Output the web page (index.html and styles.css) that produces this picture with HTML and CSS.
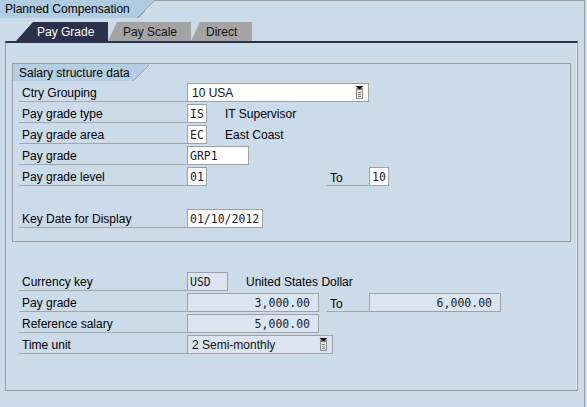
FILE: index.html
```html
<!DOCTYPE html>
<html lang="en">
<head>
    <meta charset="UTF-8">
    <title>Planned Compensation</title>
    <link rel="stylesheet" href="styles.css">
</head>
<body>
    <div class="screen">
        <div class="title-bar">
            <div class="title-tab">Planned Compensation</div>
            <div class="title-corner"></div>
            <div class="title-rule"></div>
        </div>

        <div class="tabstrip">
            <div class="tabs">
                <div class="tab tab-active">Pay Grade</div>
                <div class="tab tab-scale">Pay Scale</div>
                <div class="tab tab-direct">Direct</div>
            </div>

            <div class="tab-body">
                <!-- Salary structure data -->
                <div class="group">
                    <div class="group-head">
                        <div class="group-title">Salary structure data</div>
                        <div class="group-corner"></div>
                        <div class="group-rule"></div>
                    </div>
                    <div class="rows rows-group">
                        <div class="row">
                            <div class="lbl">Ctry Grouping</div>
                            <div class="fld w-ctry">
                                <span class="val">10 USA</span>
                                <svg class="f4" width="9" height="13" viewBox="0 0 9 13">
                                    <rect x="1" y="2" width="7" height="11" fill="#8c8c8c"/>
                                    <rect x="2" y="4" width="5" height="8" fill="#ececec"/>
                                    <path d="M3 6.5h3M3 8.5h3M3 10.5h3" stroke="#808080" stroke-width="1"/>
                                    <path d="M0.5 0H8.5L4.5 3.5Z" fill="#000"/>
                                </svg>
                            </div>
                        </div>
                        <div class="row">
                            <div class="lbl">Pay grade type</div>
                            <div class="fld mono w-2">IS</div>
                            <div class="desc">IT Supervisor</div>
                        </div>
                        <div class="row">
                            <div class="lbl">Pay grade area</div>
                            <div class="fld mono w-2">EC</div>
                            <div class="desc">East Coast</div>
                        </div>
                        <div class="row">
                            <div class="lbl">Pay grade</div>
                            <div class="fld mono w-grp">GRP1</div>
                        </div>
                        <div class="row">
                            <div class="lbl">Pay grade level</div>
                            <div class="fld mono w-2">01</div>
                            <div class="to to-far">To</div>
                            <div class="fld mono w-2">10</div>
                        </div>
                        <div class="row"></div>
                        <div class="row">
                            <div class="lbl">Key Date for Display</div>
                            <div class="fld mono w-date">01/10/2012</div>
                        </div>
                    </div>
                </div>

                <!-- Currency and amounts -->
                <div class="rows rows-lower">
                    <div class="row">
                        <div class="lbl">Currency key</div>
                        <div class="fld mono ro w-cur">USD</div>
                        <div class="desc">United States Dollar</div>
                    </div>
                    <div class="row">
                        <div class="lbl">Pay grade</div>
                        <div class="fld mono ro num w-amt">3,000.00</div>
                        <div class="to">To</div>
                        <div class="fld mono ro num w-amt">6,000.00</div>
                    </div>
                    <div class="row">
                        <div class="lbl">Reference salary</div>
                        <div class="fld mono ro num w-amt">5,000.00</div>
                    </div>
                    <div class="row">
                        <div class="lbl">Time unit</div>
                        <div class="fld ro w-unit">
                            <span class="val">2 Semi-monthly</span>
                            <svg class="f4" width="9" height="13" viewBox="0 0 9 13">
                                <rect x="1" y="2" width="7" height="11" fill="#8c8c8c"/>
                                <rect x="2" y="4" width="5" height="8" fill="#ececec"/>
                                <path d="M3 6.5h3M3 8.5h3M3 10.5h3" stroke="#808080" stroke-width="1"/>
                                <path d="M0.5 0H8.5L4.5 3.5Z" fill="#000"/>
                            </svg>
                        </div>
                    </div>
                </div>
            </div>
        </div>
    </div>
</body>
</html>
```

FILE: styles.css
```css
body {
    margin: 0;
    background: #cbdbea;
    font-family: 'Liberation Sans', Arial, sans-serif;
    font-size: 12px;
    color: #000;
}

.screen {
    width: 585px;
    height: 407px;
    box-sizing: border-box;
    border-right: 1px solid #9c9c9c;
}

/* screen title with slanted corner */
.title-bar {
    display: flex;
    height: 18px;
}

.title-tab {
    width: 137px;
    padding: 1px 0 0 5px;
    box-sizing: border-box;
    background: #b0cce0;
    line-height: 17px;
    white-space: nowrap;
}

.title-corner {
    width: 17px;
    background: linear-gradient(to bottom right, #b0cce0 50%, #8fa2b3 50%, #8fa2b3 calc(50% + 1px), transparent calc(50% + 1px));
}

.title-rule {
    flex: 1;
    border-top: 1px solid #9c9c9c;
}

/* tab strip */
.tabstrip {
    margin: 4px 0 0 5px;
    width: 573px;
}

.tabs {
    display: flex;
    height: 19px;
    padding-left: 11px;
}

.tab {
    padding-top: 1px;
    line-height: 18px;
    box-sizing: border-box;
    white-space: nowrap;
    background: #a4a4a4;
    color: #111;
    clip-path: polygon(9px 0, 100% 0, 100% 100%, 0 100%);
}

.tab-active {
    width: 92px;
    padding-left: 21px;
    background: #2c304b;
    color: #fff;
    clip-path: polygon(17px 0, 100% 0, 100% 100%, 0 100%);
}

.tab-scale {
    width: 83px;
    padding-left: 15px;
}

.tab-direct {
    width: 61px;
    padding-left: 15px;
}

.tab-body {
    height: 350px;
    box-sizing: border-box;
    border-top: 2px solid #2c304b;
    border-left: 1px solid #9c9c9c;
    border-right: 1px solid #9c9c9c;
    border-bottom: 1px solid #9c9c9c;
    box-shadow: inset -1px 0 0 #e4ecf4;
    padding: 20px 6px 0 6px;
}

/* group box */
.group {
    border: 1px solid #9c9c9c;
    border-top: none;
    padding-bottom: 13px;
}

.group-head {
    display: flex;
    height: 18px;
}

.group-title {
    width: 119px;
    padding: 1px 0 0 6px;
    box-sizing: border-box;
    border-top: 1px solid #9c9c9c;
    background: #b4cfe2;
    line-height: 16px;
    white-space: nowrap;
}

.group-corner {
    width: 17px;
    border-top: 1px solid #9c9c9c;
    background: linear-gradient(to bottom right, #b4cfe2 50%, #8fa2b3 50%, #8fa2b3 calc(50% + 1px), transparent calc(50% + 1px));
}

.group-rule {
    flex: 1;
    border-top: 1px solid #9c9c9c;
}

/* field rows */
.rows {
    display: flex;
    flex-direction: column;
    gap: 2px;
}

.rows-group {
    margin-top: 2px;
    padding-left: 6px;
}

.rows-lower {
    margin-top: 30px;
    padding-left: 7px;
}

.row {
    display: flex;
    height: 19px;
}

.lbl {
    width: 168px;
    box-sizing: border-box;
    padding: 1px 0 0 3px;
    border-bottom: 1px solid #a4a4a4;
    line-height: 18px;
    white-space: nowrap;
}

.fld {
    height: 19px;
    box-sizing: border-box;
    border: 1px solid #a0a0a0;
    background: #fff;
    display: flex;
    align-items: center;
    justify-content: space-between;
    padding: 1px 4px 0 4px;
    white-space: nowrap;
    color: #111;
}

.fld.mono {
    font-family: 'DejaVu Sans Mono', 'Liberation Mono', monospace;
    font-size: 11.5px;
    padding-left: 2px;
    padding-top: 0;
    color: #1c1c2c;
}

.fld.ro {
    background: #dae5f1;
}

.fld.num {
    justify-content: flex-end;
    padding-right: 8px;
}

.f4 {
    flex: none;
    margin-top: -2px;
}

.desc {
    margin-left: 18px;
    padding-top: 1px;
    line-height: 18px;
    white-space: nowrap;
}

.to {
    width: 42px;
    box-sizing: border-box;
    margin-left: 8px;
    padding: 2px 0 0 3px;
    border-bottom: 1px solid #a4a4a4;
    line-height: 18px;
}

.to-far {
    margin-left: 120px;
}

.w-ctry { width: 182px; }
.w-2 { width: 20px; }
.w-grp { width: 62px; }
.w-date { width: 76px; }
.w-cur { width: 41px; }
.w-amt { width: 132px; }
.w-unit { width: 146px; padding-right: 4px; }
```
